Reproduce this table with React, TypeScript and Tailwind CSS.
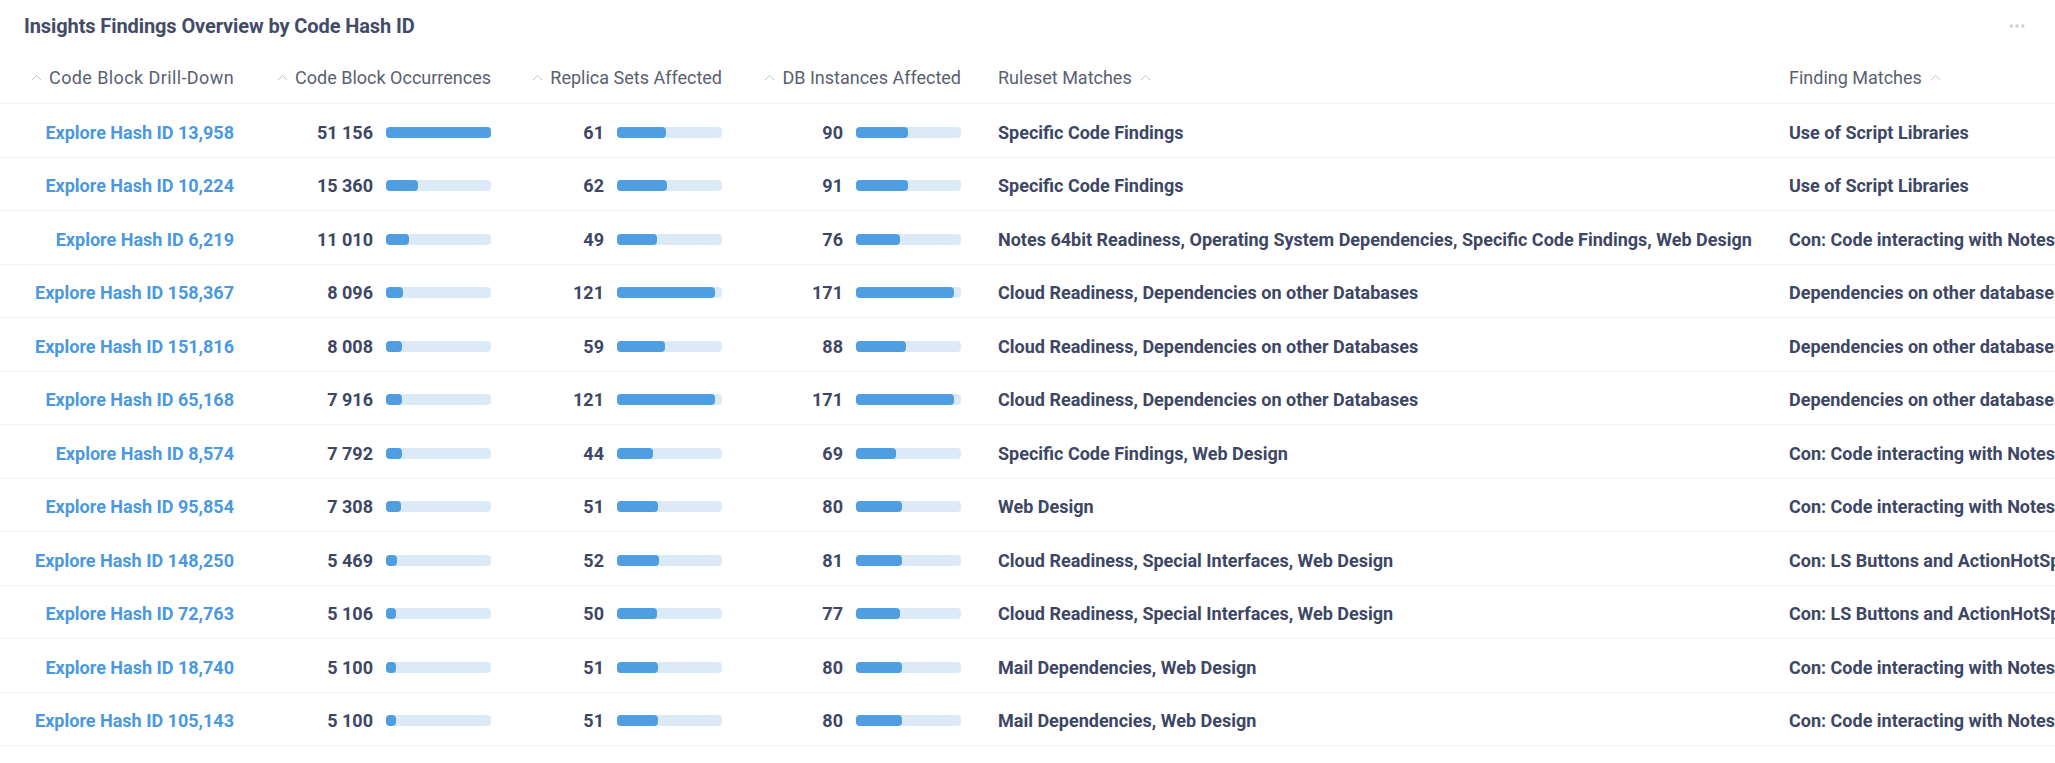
import { MoreHorizontal } from "lucide-react";

type Row = {
  hash: string;
  occ: number;
  replicas: number;
  instances: number;
  rulesets: string;
  findings: string;
};

const rows: Row[] = [
  { hash: "13,958", occ: 51156, replicas: 61, instances: 90, rulesets: "Specific Code Findings", findings: "Use of Script Libraries" },
  { hash: "10,224", occ: 15360, replicas: 62, instances: 91, rulesets: "Specific Code Findings", findings: "Use of Script Libraries" },
  { hash: "6,219", occ: 11010, replicas: 49, instances: 76, rulesets: "Notes 64bit Readiness, Operating System Dependencies, Specific Code Findings, Web Design", findings: "Con: Code interacting with Notes Client UI" },
  { hash: "158,367", occ: 8096, replicas: 121, instances: 171, rulesets: "Cloud Readiness, Dependencies on other Databases", findings: "Dependencies on other databases" },
  { hash: "151,816", occ: 8008, replicas: 59, instances: 88, rulesets: "Cloud Readiness, Dependencies on other Databases", findings: "Dependencies on other databases" },
  { hash: "65,168", occ: 7916, replicas: 121, instances: 171, rulesets: "Cloud Readiness, Dependencies on other Databases", findings: "Dependencies on other databases" },
  { hash: "8,574", occ: 7792, replicas: 44, instances: 69, rulesets: "Specific Code Findings, Web Design", findings: "Con: Code interacting with Notes Client UI" },
  { hash: "95,854", occ: 7308, replicas: 51, instances: 80, rulesets: "Web Design", findings: "Con: Code interacting with Notes Client UI" },
  { hash: "148,250", occ: 5469, replicas: 52, instances: 81, rulesets: "Cloud Readiness, Special Interfaces, Web Design", findings: "Con: LS Buttons and ActionHotSpots" },
  { hash: "72,763", occ: 5106, replicas: 50, instances: 77, rulesets: "Cloud Readiness, Special Interfaces, Web Design", findings: "Con: LS Buttons and ActionHotSpots" },
  { hash: "18,740", occ: 5100, replicas: 51, instances: 80, rulesets: "Mail Dependencies, Web Design", findings: "Con: Code interacting with Notes Client UI" },
  { hash: "105,143", occ: 5100, replicas: 51, instances: 80, rulesets: "Mail Dependencies, Web Design", findings: "Con: Code interacting with Notes Client UI" },
];

const fmt = (n: number) => n.toLocaleString("en-US").replace(/,/g, " ");

function Caret() {
  return (
    <svg width="11" height="7" viewBox="0 0 11 7" className="shrink-0">
      <path d="M1 6 L5.5 1.5 L10 6" fill="none" stroke="#c0c4cc" strokeWidth="1" />
    </svg>
  );
}

function Bar({ value, max }: { value: number; max: number }) {
  const w = Math.max(8, Math.min(105, (value / max) * 105));
  return (
    <div className="h-[11px] w-[105px] rounded-[4px] bg-[#dceaf8] shrink-0">
      <div className="h-full rounded-[4px] bg-[#4f9ee2]" style={{ width: `${w}px` }} />
    </div>
  );
}

function NumCell({ value, label, max, width }: { value: number; label: string; max: number; width: string }) {
  return (
    <div className={`${width} shrink-0 flex items-center justify-end gap-[13px]`}>
      <span>{label}</span>
      <Bar value={value} max={max} />
    </div>
  );
}

export default function App() {
  return (
    <div className="w-[2055px] h-[763px] bg-white overflow-hidden font-['Roboto',sans-serif] text-[18px] text-[#3d4664]">
      {/* Title */}
      <div className="h-[52px] flex items-center justify-between pl-6 pr-7">
        <h1 className="text-[20px] font-bold text-[#434b66] tracking-[-0.1px]">
          Insights Findings Overview by Code Hash ID
        </h1>
        <MoreHorizontal size={20} className="text-[#c9ccd3]" />
      </div>

      {/* Header */}
      <div className="h-[52px] flex items-center border-b border-[#f1f2f4] text-[#5a5f70] whitespace-nowrap">
        <div className="w-[234px] shrink-0 flex items-center justify-end gap-[7px]">
          <Caret />
          <span className="tracking-[0.4px]">Code Block Drill-Down</span>
        </div>
        <div className="w-[257px] shrink-0 flex items-center justify-end gap-[7px]">
          <Caret />
          <span>Code Block Occurrences</span>
        </div>
        <div className="w-[231px] shrink-0 flex items-center justify-end gap-[7px]">
          <Caret />
          <span>Replica Sets Affected</span>
        </div>
        <div className="w-[239px] shrink-0 flex items-center justify-end gap-[7px]">
          <Caret />
          <span>DB Instances Affected</span>
        </div>
        <div className="ml-[37px] w-[791px] shrink-0 flex items-center gap-[8px]">
          <span>Ruleset Matches</span>
          <Caret />
        </div>
        <div className="flex-1 flex items-center gap-[8px]">
          <span>Finding Matches</span>
          <Caret />
        </div>
      </div>

      {/* Rows */}
      {rows.map((r) => (
        <div
          key={r.hash}
          className="h-[53.5px] pt-1 flex items-center border-b border-[#f1f2f4] font-bold whitespace-nowrap"
        >
          <div className="w-[234px] shrink-0 text-right text-[#4a98e0]">Explore Hash ID {r.hash}</div>
          <NumCell value={r.occ} label={fmt(r.occ)} max={51156} width="w-[257px]" />
          <NumCell value={r.replicas} label={String(r.replicas)} max={130} width="w-[231px]" />
          <NumCell value={r.instances} label={String(r.instances)} max={183} width="w-[239px]" />
          <div className="ml-[37px] w-[791px] shrink-0 overflow-hidden">{r.rulesets}</div>
          <div className="flex-1 min-w-0 overflow-hidden">{r.findings}</div>
        </div>
      ))}
    </div>
  );
}
